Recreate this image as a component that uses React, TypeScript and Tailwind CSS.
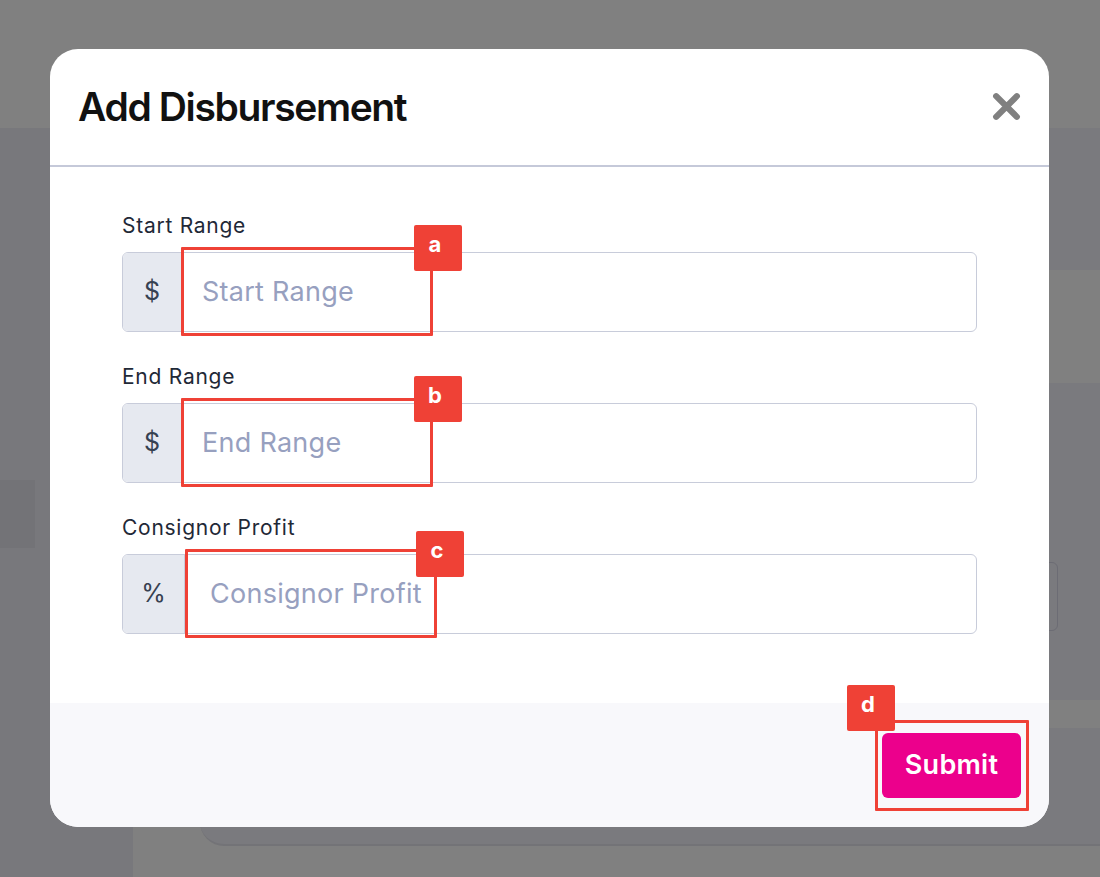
import React from 'react';

const font = { fontFamily: 'Inter, "Noto Sans", sans-serif' };

function Marker({ letter, className }: { letter: string; className: string }) {
  return (
    <div
      className={`absolute w-[48px] h-[46px] bg-[#ef4136] rounded-[2px] flex justify-center pt-[8px] pr-[6px] text-white text-[22px] font-bold leading-none ${className}`}
    >
      {letter}
    </div>
  );
}

function Field({
  label,
  addon,
  placeholder,
  marker,
  wide,
}: {
  label: string;
  addon: string;
  placeholder: string;
  marker: string;
  wide?: boolean;
}) {
  return (
    <div className="flex flex-col">
      <label className="text-[21px] tracking-[0.035em] leading-[28px] text-[#1f2937] mb-[12px]">{label}</label>
      <div className="relative flex h-[80px] rounded-[6px] border border-[#c8ccda] bg-white">
        <div
          className={`flex items-center justify-center ${wide ? 'w-[62px]' : 'w-[59px]'} bg-[#e6e9f0] border-r border-[#c8ccda] rounded-l-[5px] text-[25px] text-[#374151]`}
        >
          {addon}
        </div>
        <input
          placeholder={placeholder}
          className={`flex-1 ${wide ? 'pl-[25px]' : 'pl-[20px]'} text-[27px] tracking-[0.01em] text-[#111827] placeholder:text-[#97a0bf] outline-none bg-transparent rounded-r-[6px]`}
        />
        <div
          className={`absolute ${wide ? 'left-[62px]' : 'left-[58px]'} top-[-6px] w-[252px] h-[89px] border-[3px] border-[#ef4136] rounded-[1px] pointer-events-none`}
        />
        <Marker letter={marker} className={wide ? 'left-[293px] top-[-24px]' : 'left-[291px] top-[-28px]'} />
      </div>
    </div>
  );
}

export default function App() {
  return (
    <div className="relative w-full h-[877px] overflow-hidden" style={font}>
      {/* page behind the overlay */}
      <div className="flex flex-col h-full bg-[#7a7a7e]">
        <div className="h-[128px] bg-[#808080] shrink-0" />
        <div className="flex flex-1">
          <div className="w-[133px] shrink-0 bg-[#78787c] flex flex-col pt-[352px]">
            <div className="w-[35px] h-[68px] bg-[#737377]" />
          </div>
          <div className="flex-1 flex flex-col">
            <div className="h-[142px] bg-[#7a7a7e]" />
            <div className="h-[113px] bg-[#808080]" />
            <div className="h-[317px] bg-[#7a7a7e] flex flex-col items-end pt-[179px] pr-[42px]">
              <div className="w-[200px] h-[69px] rounded-[6px] border border-[#6c6c74]" />
            </div>
            <div className="h-[28px] bg-[#808080]" />
            <div className="flex-1 bg-[#808080] flex flex-col">
              <div className="ml-[67px] h-[118px] bg-[#7a7a7e] rounded-bl-[24px] border-b-2 border-[#737377]" />
            </div>
          </div>
        </div>
      </div>

      {/* modal */}
      <div className="absolute inset-0 flex pl-[50px] pt-[49px]">
        <div className="w-[999px] h-[778px] bg-white rounded-[28px] flex flex-col overflow-hidden">
          <div className="h-[118px] shrink-0 flex items-center justify-between pl-[28px] pr-[27px] border-b-2 border-[#c5c9d9]">
            <h2 className="text-[39px] font-semibold tracking-[-0.035em] text-[#111111] leading-none pb-[2px]">
              Add Disbursement
            </h2>
            <svg width="31" height="31" viewBox="0 0 30 30" className="mb-[2px]">
              <path d="M5 5 L25 25 M25 5 L5 25" stroke="#808080" strokeWidth="6" strokeLinecap="round" />
            </svg>
          </div>
          <div className="flex-1 flex flex-col gap-[31px] px-[72px] pt-[45px]">
            <Field label="Start Range" addon="$" placeholder="Start Range" marker="a" />
            <Field label="End Range" addon="$" placeholder="End Range" marker="b" />
            <Field label="Consignor Profit" addon="%" placeholder="Consignor Profit" marker="c" wide />
          </div>
          <div className="h-[124px] shrink-0 bg-[#f8f8fb] flex justify-end items-start pt-[30px] pr-[28px]">
            <div className="relative">
              <button className="w-[139px] h-[65px] rounded-[6px] bg-[#ec008c] text-white text-[27px] font-semibold tracking-[0.01em]">
                Submit
              </button>
              <div className="absolute left-[-7px] top-[-13px] w-[154px] h-[91px] border-[3px] border-[#ef4136] rounded-[1px] pointer-events-none" />
              <Marker letter="d" className="left-[-35px] top-[-48px]" />
            </div>
          </div>
        </div>
      </div>
    </div>
  );
}
